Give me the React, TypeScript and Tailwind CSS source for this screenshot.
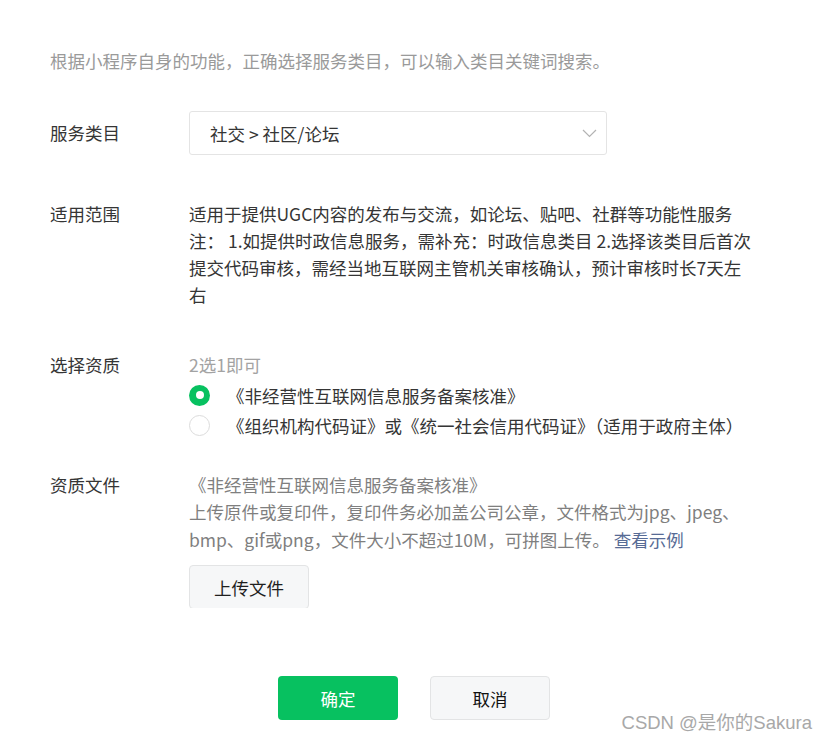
import { useState } from "react";

const cjk = "font-['Noto_Sans_CJK_SC',sans-serif]";

function Radio({ checked }: { checked: boolean }) {
  if (checked) {
    return (
      <span className="flex h-[21px] w-[21px] shrink-0 items-center justify-center rounded-full bg-[#07c160]">
        <span className="h-[8px] w-[8px] rounded-full bg-white" />
      </span>
    );
  }
  return (
    <span className="h-[21px] w-[21px] shrink-0 rounded-full border border-[#dcdcdc] bg-white" />
  );
}

export default function App() {
  const [choice, setChoice] = useState(0);

  return (
    <div
      className={`relative h-[744px] w-[828px] overflow-hidden bg-white text-[17.5px] leading-[27px] text-[#353535] ${cjk}`}
    >
      {/* scrollable body */}
      <div className="h-[608px] overflow-hidden pl-[50px] pt-[47px]">
        <p className="text-[#9a9a9a]">
          根据小程序自身的功能，正确选择服务类目，可以输入类目关键词搜索。
        </p>

        <div className="mt-[37px] flex">
          <div className="w-[139px] shrink-0 leading-[44px]">服务类目</div>
          <div className="flex h-[44px] w-[418px] items-center justify-between rounded-[3px] border border-[#e4e4e4] pl-5 pr-[9px]">
            <span>社交 &gt; 社区/论坛</span>
            <svg width="15" height="9" viewBox="0 0 15 9" fill="none">
              <polyline
                points="1,1 7.5,7.5 14,1"
                stroke="#b3b3b3"
                strokeWidth="1.2"
              />
            </svg>
          </div>
        </div>

        <div className="mt-[45px] flex">
          <div className="w-[139px] shrink-0">适用范围</div>
          <div className="whitespace-nowrap">
            <div>适用于提供UGC内容的发布与交流，如论坛、贴吧、社群等功能性服务</div>
            <div>注： 1.如提供时政信息服务，需补充：时政信息类目 2.选择该类目后首次</div>
            <div>提交代码审核，需经当地互联网主管机关审核确认，预计审核时长7天左</div>
            <div>右</div>
          </div>
        </div>

        <div className="mt-[43px] flex">
          <div className="w-[139px] shrink-0">选择资质</div>
          <div>
            <div className="text-[#a3a3a3]">2选1即可</div>
            <div className="mt-[2px]">
              {[
                "《非经营性互联网信息服务备案核准》",
                "《组织机构代码证》或《统一社会信用代码证》（适用于政府主体）",
              ].map((t, i) => (
                <div
                  key={i}
                  className="flex h-[30px] cursor-pointer items-center gap-[17px]"
                  onClick={() => setChoice(i)}
                >
                  <Radio checked={choice === i} />
                  <span className="whitespace-nowrap">{t}</span>
                </div>
              ))}
            </div>
          </div>
        </div>

        <div className="mt-[31px] flex">
          <div className="w-[139px] shrink-0">资质文件</div>
          <div className="text-[#7f7f7f]">
            <div>《非经营性互联网信息服务备案核准》</div>
            <div className="whitespace-nowrap leading-[27.5px]">
              <div>上传原件或复印件，复印件务必加盖公司公章，文件格式为jpg、jpeg、</div>
              <div>
                bmp、gif或png，文件大小不超过10M，可拼图上传。{" "}
                <a className="text-[#576b95]">查看示例</a>
              </div>
            </div>
            <button className="mt-[12px] h-[44px] w-[120px] rounded-[4px] border border-[#e3e4e5] bg-[#f6f7f8] text-[#1f1f1f]">
              上传文件
            </button>
          </div>
        </div>
      </div>

      {/* footer */}
      <div className="flex justify-center gap-8 pt-[68px]">
        <button className="h-[44px] w-[120px] rounded-[4px] bg-[#07c160] text-white">
          确定
        </button>
        <button className="h-[44px] w-[120px] rounded-[4px] border border-[#e3e4e5] bg-[#f6f7f8] text-[#111]">
          取消
        </button>
      </div>

      <div className="absolute bottom-[11px] right-[16px] font-['Liberation_Sans','Noto_Sans_CJK_SC',sans-serif] text-[18.5px] leading-[20px] text-[#a8a8a8] [text-shadow:1px_1px_1px_rgba(255,255,255,0.9)]">
        CSDN @是你的Sakura
      </div>
    </div>
  );
}
